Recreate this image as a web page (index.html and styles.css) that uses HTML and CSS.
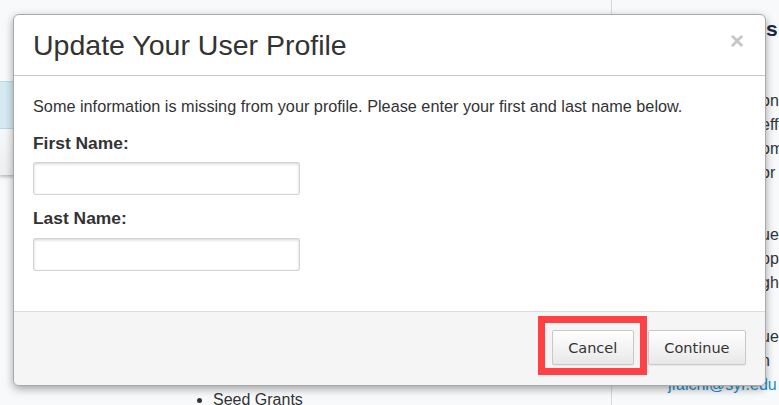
FILE: index.html
```html
<!DOCTYPE html>
<html lang="en">
<head>
<meta charset="utf-8">
<title>Update Your User Profile</title>
<link rel="stylesheet" href="styles.css">
</head>
<body>
<div class="page">
  <div class="main">
    <div class="band"></div>
    <div class="panel"></div>
    <ul class="list">
      <li>Seed Grants</li>
    </ul>
  </div>
  <div class="side">
    <h2 class="side-title"><span class="pre">Contact</span>s</h2>
    <div class="para">
      <div class="line"><span class="pre">Research information</span>on the sponsored</div>
      <div class="line"><span class="pre">Grants and more</span>efforts across</div>
      <div class="line"><span class="pre">Assistance from</span>om the office</div>
      <div class="line"><span class="pre">Research and more</span>or the campus</div>
    </div>
    <div class="para p2">
      <div class="line"><span class="pre">Questions about</span>uestions</div>
      <div class="line"><span class="pre">Additional</span>pplications</div>
      <div class="line"><span class="pre">Submitted through</span>gh the portal</div>
    </div>
    <div class="para p3">
      <div class="line"><span class="pre">For questions</span>uestions</div>
      <div class="line"><span class="pre">Please contact</span>n</div>
      <div class="line"><a class="mail" href="#">jfalchi@syr.edu</a></div>
    </div>
  </div>
</div>

<div class="modal">
  <div class="modal-header">
    <h1 class="modal-title">Update Your User Profile</h1>
    <span class="close">&times;</span>
  </div>
  <div class="modal-body">
    <p class="intro">Some information is missing from your profile. Please enter your first and last name below.</p>
    <label class="label first" for="fn">First Name:</label>
    <input class="field f1" id="fn" type="text">
    <label class="label second" for="ln">Last Name:</label>
    <input class="field f2" id="ln" type="text">
  </div>
  <div class="modal-footer">
    <div class="highlight">
      <button class="btn">Cancel</button>
    </div>
    <button class="btn continue">Continue</button>
  </div>
</div>
</body>
</html>
```

FILE: styles.css
```css
*, *::before, *::after {
  box-sizing: border-box;
}

html, body {
  margin: 0;
  padding: 0;
  width: 779px;
  height: 405px;
  overflow: hidden;
  background: #f8f9fb;
  font-family: "Liberation Sans", Arial, sans-serif;
  color: #333;
}

.page {
  display: flex;
  height: 405px;
}

.main {
  width: 612px;
  border-right: 1px solid #d8d8d8;
  display: flex;
  flex-direction: column;
}

.band {
  margin-top: 81px;
  height: 48px;
  background: #d5eaf3;
  border-top: 1px solid #b4e0ec;
  border-bottom: 1px solid #b4e0ec;
}

.panel {
  height: 46px;
  background: linear-gradient(#f7f8fa, #eceef0);
  box-shadow: 0 2px 3px rgba(0,0,0,.25);
}

.list {
  margin: auto 0 0 0;
  padding: 0 0 0 213px;
  font-size: 16px;
  line-height: 20px;
  color: #333;
  transform: translateY(5px);
}

.side {
  flex: 1;
  padding-left: 56px;
  font-size: 16px;
  color: #333;
  white-space: nowrap;
  overflow: hidden;
}

.pre {
  display: inline-block;
  width: 93px;
  overflow: hidden;
  vertical-align: top;
  white-space: nowrap;
}

.side-title {
  margin: 16px 0 0 0;
  font-size: 21px;
  line-height: 26px;
  font-weight: bold;
  color: #1c2a44;
}

.side-title .pre {
  width: 98px;
}

.para {
  margin-top: 47px;
}

.para.p2 {
  margin-top: 38px;
}

.para.p3 {
  margin-top: 30px;
}

.line {
  line-height: 24px;
  height: 24px;
}

.mail {
  color: #1a8fd0;
  text-decoration: none;
}

.modal {
  position: absolute;
  left: 13px;
  top: 14px;
  width: 753px;
  height: 372px;
  background: #fff;
  border: 1px solid #a9a9a9;
  border-radius: 6px;
  box-shadow: 0 3px 8px rgba(0,0,0,.35);
  display: flex;
  flex-direction: column;
  overflow: hidden;
}

.modal-header {
  height: 61px;
  flex: none;
  border-bottom: 1px solid #c8c8c8;
  display: flex;
  align-items: center;
  justify-content: space-between;
  padding: 0 21px 0 19px;
}

.modal-title {
  margin: 0;
  font-size: 28.5px;
  font-weight: normal;
  color: #333;
  line-height: 32px;
}

.close {
  font-size: 24px;
  font-weight: bold;
  color: #c6c6c6;
  line-height: 24px;
  margin-top: -9px;
}

.modal-body {
  flex: 1;
  padding: 20px 19px 0 19px;
  display: flex;
  flex-direction: column;
  align-items: flex-start;
}

.intro {
  margin: 0;
  font-size: 16.25px;
  line-height: 20px;
  color: #333;
}

.label {
  font-weight: bold;
  font-size: 17.4px;
  line-height: 20px;
  color: #333;
}

.label.first {
  margin-top: 17px;
}

.label.second {
  margin-top: 13px;
}

.field {
  width: 267px;
  height: 33px;
  border: 1px solid #d4d4d4;
  border-radius: 2px;
  background: #fff;
  box-shadow: inset 0 1px 3px rgba(0,0,0,.18);
  padding: 0;
  margin: 0;
}

.field.f1 {
  margin-top: 9px;
}

.field.f2 {
  margin-top: 10px;
}

.modal-footer {
  height: 74px;
  flex: none;
  border-top: 1px solid #dcdcdc;
  background: #f5f5f5;
  display: flex;
  align-items: flex-start;
  justify-content: flex-end;
  padding: 4px 19px 0 0;
  gap: 1px;
}

.highlight {
  border: 7px solid #ff4044;
  padding: 7px 6px 3px 7px;
}

.btn {
  font-family: "DejaVu Sans", sans-serif;
  font-size: 14.5px;
  color: #333;
  height: 35px;
  padding: 0 15.5px;
  border: 1px solid #c8c8c8;
  border-radius: 2px;
  background: linear-gradient(#ffffff, #e8e8e8);
  box-shadow: 0 1px 1px rgba(0,0,0,.05);
  margin: 0;
}

.btn.continue {
  margin-top: 14px;
  padding: 0 15.5px;
}
```
